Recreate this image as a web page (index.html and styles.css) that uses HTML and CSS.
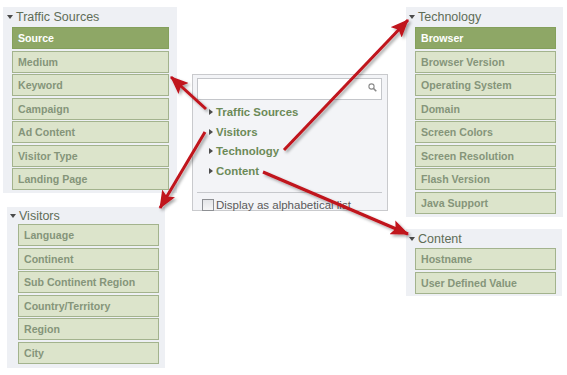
FILE: index.html
```html
<!DOCTYPE html>
<html>
<head>
    <title>Dimension picker</title>
    <link rel="stylesheet" href="styles.css">
</head>
<body>
    <div class="canvas">
        <div class="col col-left">
            <div class="panel traffic">
                <div class="panel-title"><span class="down"></span>Traffic Sources</div>
                <div class="item selected">Source</div>
                <div class="item">Medium</div>
                <div class="item">Keyword</div>
                <div class="item">Campaign</div>
                <div class="item">Ad Content</div>
                <div class="item">Visitor Type</div>
                <div class="item">Landing Page</div>
            </div>
            <div class="panel visitors">
                <div class="panel-title"><span class="down"></span>Visitors</div>
                <div class="item">Language</div>
                <div class="item">Continent</div>
                <div class="item">Sub Continent Region</div>
                <div class="item">Country/Territory</div>
                <div class="item">Region</div>
                <div class="item">City</div>
            </div>
        </div>

        <div class="col col-mid">
            <div class="picker">
                <div class="search">
                    <svg width="9" height="9" viewBox="0 0 9 9">
                        <circle cx="3.5" cy="3.5" r="2.6" fill="none" stroke="#8a8a8a" stroke-width="1.1"/>
                        <line x1="5.4" y1="5.4" x2="8.3" y2="8.3" stroke="#8a8a8a" stroke-width="1.5"/>
                    </svg>
                </div>
                <ul class="groups">
                    <li><span class="right"></span>Traffic Sources</li>
                    <li><span class="right"></span>Visitors</li>
                    <li><span class="right"></span>Technology</li>
                    <li><span class="right"></span>Content</li>
                </ul>
                <label class="alpha"><span class="box"></span>Display as alphabetical list</label>
            </div>
        </div>

        <div class="col col-right">
            <div class="panel technology">
                <div class="panel-title"><span class="down"></span>Technology</div>
                <div class="item selected">Browser</div>
                <div class="item">Browser Version</div>
                <div class="item">Operating System</div>
                <div class="item">Domain</div>
                <div class="item">Screen Colors</div>
                <div class="item">Screen Resolution</div>
                <div class="item">Flash Version</div>
                <div class="item">Java Support</div>
            </div>
            <div class="panel content">
                <div class="panel-title"><span class="down"></span>Content</div>
                <div class="item">Hostname</div>
                <div class="item">User Defined Value</div>
            </div>
        </div>
    </div>

    <!-- callout arrows -->
    <svg class="arrows" width="567" height="375" viewBox="0 0 567 375">
        <defs>
            <marker id="head" markerWidth="18" markerHeight="15" refX="17" refY="7.5" orient="auto" markerUnits="userSpaceOnUse">
                <path d="M0,0 L18,7.5 L0,15 L3.5,7.5 z" fill="#c0121b"/>
            </marker>
            <filter id="shadow" x="-20%" y="-20%" width="140%" height="140%">
                <feDropShadow dx="2" dy="2" stdDeviation="1.4" flood-color="#000" flood-opacity="0.35"/>
            </filter>
        </defs>
        <g stroke="#c0121b" stroke-width="3" fill="none" filter="url(#shadow)">
            <line x1="206" y1="109" x2="171" y2="77" marker-end="url(#head)"/>
            <line x1="205" y1="132" x2="160" y2="208" marker-end="url(#head)"/>
            <line x1="284" y1="150" x2="408" y2="20" marker-end="url(#head)"/>
            <line x1="263" y1="172" x2="408" y2="234" marker-end="url(#head)"/>
        </g>
    </svg>
</body>
</html>
```

FILE: styles.css
```css
body {
    margin: 0;
    background: #ffffff;
    font-family: "Liberation Sans", Arial, sans-serif;
    position: relative;
    width: 567px;
    height: 375px;
    overflow: hidden;
}
.canvas {
    display: flex;
    align-items: flex-start;
}
.col {
    display: flex;
    flex-direction: column;
}
.col-left {
    width: 177px;
}
.col-mid {
    margin-left: 15px;
    margin-top: 74px;
}
.col-right {
    margin-left: 18px;
}

/* panels */
.panel {
    background: #eef0f4;
    box-sizing: border-box;
}
.panel-title {
    display: flex;
    align-items: center;
    font-size: 12.5px;
    color: #5f6d57;
}
.down {
    width: 0;
    height: 0;
    border-left: 3.5px solid transparent;
    border-right: 3.5px solid transparent;
    border-top: 4px solid #4a4a4a;
    margin-right: 3px;
}
.item {
    height: 22px;
    margin-bottom: 1.5px;
    box-sizing: border-box;
    border: 1px solid #a3b38d;
    background: #dce4cb;
    color: #85957a;
    font-size: 10.6px;
    font-weight: bold;
    line-height: 20px;
    padding-left: 5px;
    white-space: nowrap;
}
.item.selected {
    background: #8ea766;
    border-color: #84a05c;
    color: #ffffff;
}

.traffic {
    margin: 7px 0 0 3px;
    width: 174px;
    padding: 0 8px 1.5px 9px;
}
.traffic .panel-title {
    height: 20px;
    margin-left: -7px;
    padding-left: 2px;
}
.visitors {
    margin: 14px 0 0 7px;
    width: 158px;
    padding: 0 6px 2.5px 11px;
}
.visitors .panel-title {
    height: 17px;
    margin-left: -8px;
}
.technology {
    margin-top: 7px;
    width: 157px;
    padding: 0 7px 2px 9px;
}
.technology .panel-title {
    height: 20px;
    margin-left: -6px;
}
.content {
    margin-top: 12px;
    width: 156px;
    padding: 0 6px 0.5px 9px;
}
.content .panel-title {
    height: 19px;
    margin-left: -6px;
}

/* picker widget */
.picker {
    width: 196px;
    height: 137px;
    box-sizing: border-box;
    border: 1px solid #c9cacd;
    background: #f3f4f7;
    padding: 3px 5px 0 4px;
}
.search {
    height: 22px;
    box-sizing: border-box;
    border: 1px solid #c4c6ca;
    background: #ffffff;
    display: flex;
    justify-content: flex-end;
    align-items: center;
    padding-right: 4px;
}
.search svg {
    margin-top: -4px;
}
.groups {
    list-style: none;
    margin: 0;
    padding: 2px 0 0 12px;
    height: 90px;
    border-bottom: 1px solid #c6c8cc;
}
.groups li {
    display: flex;
    align-items: center;
    height: 19.7px;
    font-size: 11.4px;
    font-weight: bold;
    color: #6c8a57;
}
.right {
    width: 0;
    height: 0;
    border-top: 3.5px solid transparent;
    border-bottom: 3.5px solid transparent;
    border-left: 4px solid #4d4d4d;
    margin-right: 3px;
}
.alpha {
    display: flex;
    align-items: center;
    padding: 6px 0 0 5px;
    font-size: 11.5px;
    color: #5a5a5a;
}
.box {
    width: 12px;
    height: 12px;
    box-sizing: border-box;
    border: 1px solid #8e9094;
    background: linear-gradient(#e4e5e8, #f6f6f7);
    margin-right: 2px;
}

.arrows {
    position: absolute;
    left: 0;
    top: 0;
    pointer-events: none;
}
```
